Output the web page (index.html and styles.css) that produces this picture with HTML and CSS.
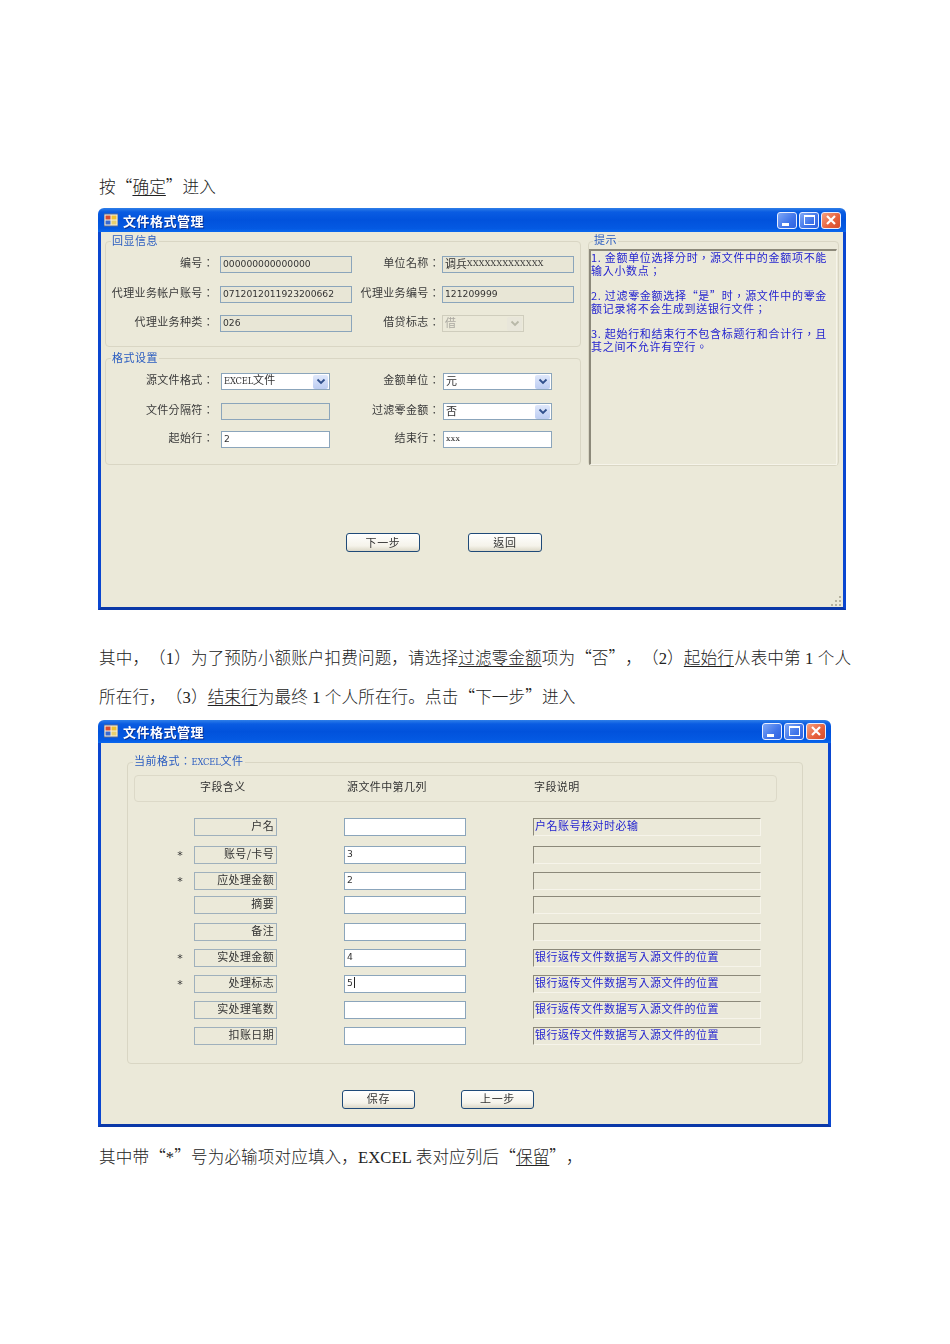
FILE: index.html
```html
<!DOCTYPE html>
<html lang="zh-CN">
<head>
<meta charset="utf-8">
<title>文件格式管理</title>
<link rel="stylesheet" href="styles.css">
</head>
<body>
<p class="para first">按<span class="q">“</span><u>确定</u><span class="q">”</span>进入</p>

<section class="win win-a" lang="zh-TW">
  <header class="titlebar">
    <svg class="appicon" viewBox="0 0 14 14"><rect x="0" y="1" width="14" height="12" fill="#f4f0e0" stroke="#5a6a90"/><rect x="1.5" y="2.5" width="5" height="4" fill="#d84a30"/><rect x="7.5" y="2.5" width="5" height="4" fill="#f0c030"/><rect x="1.5" y="7.5" width="5" height="4" fill="#3a6ad0"/><rect x="7.5" y="7.5" width="5" height="4" fill="#e8d070"/></svg>
    <span class="wintitle">文件格式管理</span>
    <span class="winbtn wb-min"><i class="glyph-min"></i></span>
    <span class="winbtn wb-max"><i class="glyph-max"></i></span>
    <span class="winbtn wb-close"><svg viewBox="0 0 12 12"><path d="M2 2L10 10M10 2L2 10" stroke="#fff" stroke-width="2.2"/></svg></span>
  </header>
  <div class="client client-a">
    <div class="leftcol">
      <div class="group group-a">
        <span class="legend">回显信息</span>
        <div class="form form-echo">
          <span class="lbl">编号：</span><span class="fld ro lat">000000000000000</span>
          <span class="lbl">单位名称：</span><span class="fld ro lat"><span class="cn">调兵</span><span class="xs">XXXXXXXXXXXXX</span></span>
          <span class="lbl">代理业务帐户账号：</span><span class="fld ro lat">0712012011923200662</span>
          <span class="lbl">代理业务编号：</span><span class="fld ro lat">121209999</span>
          <span class="lbl">代理业务种类：</span><span class="fld ro lat">026</span>
          <span class="lbl">借贷标志：</span><span class="fld combo disabled short"><span>借</span><span class="arrow"><svg viewBox="0 0 10 8"><path d="M1.5 1.5L5 5L8.5 1.5" fill="none" stroke="#b8b8a8" stroke-width="1.8"/></svg></span></span>
        </div>
      </div>
      <div class="group group-b">
        <span class="legend">格式设置</span>
        <div class="form form-fmt">
          <span class="lbl">源文件格式：</span><span class="fld combo"><span><span class="serif">EXCEL</span>文件</span><span class="arrow"><svg viewBox="0 0 10 8"><path d="M1.5 1.5L5 5L8.5 1.5" fill="none" stroke="#30508c" stroke-width="1.8"/></svg></span></span>
          <span class="lbl">金额单位：</span><span class="fld combo"><span>元</span><span class="arrow"><svg viewBox="0 0 10 8"><path d="M1.5 1.5L5 5L8.5 1.5" fill="none" stroke="#30508c" stroke-width="1.8"/></svg></span></span>
          <span class="lbl">文件分隔符：</span><span class="fld ro"></span>
          <span class="lbl">过滤零金额：</span><span class="fld combo"><span>否</span><span class="arrow"><svg viewBox="0 0 10 8"><path d="M1.5 1.5L5 5L8.5 1.5" fill="none" stroke="#30508c" stroke-width="1.8"/></svg></span></span>
          <span class="lbl">起始行：</span><span class="fld lat">2</span>
          <span class="lbl">结束行：</span><span class="fld"><span class="xs">xxx</span></span>
        </div>
      </div>
      <div class="actions actions-a">
        <span class="btn">下一步</span>
        <span class="btn">返回</span>
      </div>
    </div>
    <div class="group group-tip">
      <span class="legend">提示</span>
      <div class="tipbox">1. 金额单位选择分时，源文件中的金额项不能<br>输入小数点；<br><br>2. 过滤零金额选择“是”时，源文件中的零金<br>额记录将不会生成到送银行文件；<br><br>3. 起始行和结束行不包含标题行和合计行，且<br>其之间不允许有空行。</div>
    </div>
    <svg class="grip" viewBox="0 0 12 12"><g fill="#b5b2a0"><rect x="9" y="9" width="2" height="2"/><rect x="5" y="9" width="2" height="2"/><rect x="1" y="9" width="2" height="2"/><rect x="9" y="5" width="2" height="2"/><rect x="5" y="5" width="2" height="2"/><rect x="9" y="1" width="2" height="2"/></g></svg>
  </div>
</section>

<p class="para second">其中，（1）为了预防小额账户扣费问题，请选择<u>过滤零金额</u>项为<span class="q">“</span>否<span class="q">”</span>，（2）<u>起始行</u>从表中第 1 个人<br>所在行，（3）<u>结束行</u>为最终 1 个人所在行。点击<span class="q">“</span>下一步<span class="q">”</span>进入</p>

<section class="win win-b" lang="zh-TW">
  <header class="titlebar">
    <svg class="appicon" viewBox="0 0 14 14"><rect x="0" y="1" width="14" height="12" fill="#f4f0e0" stroke="#5a6a90"/><rect x="1.5" y="2.5" width="5" height="4" fill="#d84a30"/><rect x="7.5" y="2.5" width="5" height="4" fill="#f0c030"/><rect x="1.5" y="7.5" width="5" height="4" fill="#3a6ad0"/><rect x="7.5" y="7.5" width="5" height="4" fill="#e8d070"/></svg>
    <span class="wintitle">文件格式管理</span>
    <span class="winbtn wb-min"><i class="glyph-min"></i></span>
    <span class="winbtn wb-max"><i class="glyph-max"></i></span>
    <span class="winbtn wb-close"><svg viewBox="0 0 12 12"><path d="M2 2L10 10M10 2L2 10" stroke="#fff" stroke-width="2.2"/></svg></span>
  </header>
  <div class="client client-b">
    <div class="group group-map">
      <span class="legend">当前格式：<span class="serif">EXCEL</span>文件</span>
      <div class="headpanel">
        <span>字段含义</span><span>源文件中第几列</span><span>字段说明</span>
      </div>
      <div class="rows">
        <span></span><span class="cell-l">户名</span><span class="cell-i"></span><span class="cell-d">户名账号核对时必输</span>
        <span class="star">*</span><span class="cell-l">账号/卡号</span><span class="cell-i lat">3</span><span class="cell-d"></span>
        <span class="star">*</span><span class="cell-l">应处理金额</span><span class="cell-i lat">2</span><span class="cell-d"></span>
        <span></span><span class="cell-l">摘要</span><span class="cell-i"></span><span class="cell-d"></span>
        <span></span><span class="cell-l">备注</span><span class="cell-i"></span><span class="cell-d"></span>
        <span class="star">*</span><span class="cell-l">实处理金额</span><span class="cell-i lat">4</span><span class="cell-d">银行返传文件数据写入源文件的位置</span>
        <span class="star">*</span><span class="cell-l">处理标志</span><span class="cell-i lat">5<i class="caret"></i></span><span class="cell-d">银行返传文件数据写入源文件的位置</span>
        <span></span><span class="cell-l">实处理笔数</span><span class="cell-i"></span><span class="cell-d">银行返传文件数据写入源文件的位置</span>
        <span></span><span class="cell-l">扣账日期</span><span class="cell-i"></span><span class="cell-d">银行返传文件数据写入源文件的位置</span>
      </div>
    </div>
    <div class="actions actions-b">
      <span class="btn">保存</span>
      <span class="btn">上一步</span>
    </div>
  </div>
</section>

<p class="para third">其中带<span class="q">“</span>*<span class="q">”</span>号为必输项对应填入，EXCEL 表对应列后<span class="q">“</span><u>保留</u><span class="q">”</span>，</p>
</body>
</html>
```

FILE: styles.css
```css
* { box-sizing: border-box; }
html, body { margin: 0; background: #fff; }
body {
  width: 950px;
  height: 1344px;
  overflow: hidden;
  padding: 176px 0 0 98px;
  font-family: "Liberation Serif", "Noto Sans CJK SC", serif;
  color: #222;
  text-spacing-trim: space-all;
}
.para {
  margin: 0;
  padding-left: 1px;
  font-size: 16.6px;
  font-weight: 300;
  letter-spacing: 0.11px;
  white-space: nowrap;
}
.para u { text-underline-offset: 2px; text-decoration-thickness: 1px; }
.q { font-family: "Noto Sans CJK SC", sans-serif; line-height: 0; }
.first { height: 24px; line-height: 24px; margin-bottom: 8px; }
.second { line-height: 39px; margin: 29px 0 2.5px; }
.third { line-height: 24px; margin-top: 19px; }

.win {
  display: flex;
  flex-direction: column;
  font-family: "Noto Sans CJK TC", "DejaVu Sans", sans-serif;
  font-size: 11px;
  letter-spacing: 0.35px;
  color: #333;
  filter: blur(0.3px);
}
.win-a { width: 748px; height: 402px; }
.win-b { width: 733px; height: 407px; }

.titlebar {
  display: flex;
  align-items: center;
  flex: none;
  height: 24px;
  padding: 0 5px 0 6px;
  border-radius: 6px 6px 0 0;
  background: linear-gradient(#2f7fe8 0, #0a5ce2 4px, #0152dc 50%, #0459e2 85%, #0a68ee 100%);
}
.win-b .titlebar { height: 23px; }
.appicon { width: 14px; height: 14px; flex: none; }
.wintitle {
  margin-left: 5px;
  margin-right: auto;
  font-size: 13px;
  font-weight: 700;
  letter-spacing: 0.5px;
  color: #fff;
  text-shadow: 1px 1px 0 #0a2f90;
}
.winbtn {
  display: flex;
  align-items: center;
  justify-content: center;
  width: 20px;
  height: 17px;
  margin-left: 2px;
  border: 1px solid #e8eeff;
  border-radius: 3px;
  background: linear-gradient(135deg, #7fa8f6, #3f74ea 60%, #2f62e0);
}
.wb-close { background: linear-gradient(135deg, #f4a080, #e6603c 60%, #d64c2c); }
.wb-close svg { width: 12px; height: 12px; }
.glyph-min { width: 7px; height: 3px; margin-top: 8px; margin-right: 4px; background: #fff; }
.glyph-max { width: 11px; height: 10px; border: 1px solid #fff; border-top-width: 2px; }

.client {
  position: relative;
  flex: 1;
  background: #ebe9d9;
  border: 3px solid #0a46d0;
  border-top: 0;
  border-bottom-color: #0a38a8;
}
.client-a { display: flex; gap: 7px; padding: 9px 0 0 4px; }
.client-b { padding: 19px 0 0 26px; }
.leftcol { width: 476px; }

.group {
  position: relative;
  border: 1px solid #d9d6c4;
  border-radius: 4px;
}
.group-a { height: 106px; padding-top: 14px; }
.group-b { height: 107px; padding-top: 14px; margin-top: 11px; }
.group-tip { width: 251px; height: 225px; padding: 7px 1px 1px 0; }
.group-map { width: 676px; height: 302px; padding: 12px 0 0 6px; }
.legend {
  position: absolute;
  top: -9px;
  left: 5px;
  padding: 0 1px;
  background: #ebe9d9;
  line-height: 14px;
  letter-spacing: 0.5px;
  color: #2a5cc0;
}
.group-tip .legend { top: -10px; left: 4px; }
.group-map .legend { top: -10px; }

.form { display: grid; align-items: start; }
.form-echo { grid-template-columns: 107px 139px 87px 135px; grid-template-rows: 30px 29px 17px; }
.form-fmt { grid-template-columns: 107px 117px 109px 113px; grid-template-rows: 30px 28px 17px; }
.form-echo .fld:nth-child(2), .form-echo .fld:nth-child(6), .form-echo .fld:nth-child(10) { margin-left: 7px; }
.form-echo .fld:nth-child(4), .form-echo .fld:nth-child(8), .form-echo .fld:nth-child(12) { margin-left: 3px; }
.form-fmt .fld:nth-child(2), .form-fmt .fld:nth-child(6), .form-fmt .fld:nth-child(10) { margin-left: 8px; }
.form-fmt .fld:nth-child(4), .form-fmt .fld:nth-child(8), .form-fmt .fld:nth-child(12) { margin-left: 4px; }
.lbl { line-height: 13px; margin-right: -1px; text-align: right; white-space: nowrap; color: #3a3a3a; }
.fld {
  display: flex;
  align-items: center;
  height: 17px;
  padding: 0 0 2px 2px;
  background: #fff;
  border: 1px solid #8ba5bb;
  white-space: nowrap;
}
.ro { background: #e8e6d6; }
.lat { font-family: "DejaVu Sans", "Noto Sans CJK TC", sans-serif; font-size: 9.2px; letter-spacing: 0; }
.cn { font-family: "Noto Sans CJK TC", sans-serif; font-size: 11px; line-height: 11px; padding-bottom: 1px; }
.xs { font-family: "DejaVu Serif", serif; font-size: 7.8px; letter-spacing: 0.35px; }
.serif { font-family: "DejaVu Serif", serif; font-size: 8.4px; letter-spacing: -0.2px; }
.combo { justify-content: space-between; padding: 0 1px 0 2px; }
.combo > span:first-child { line-height: 12px; padding-bottom: 3px; }
.arrow {
  display: flex;
  align-items: center;
  justify-content: center;
  width: 15px;
  height: 14px;
  border-radius: 2px;
  background: linear-gradient(#dfe8fb, #bccdf2);
}
.arrow svg { width: 10px; height: 8px; }
.disabled { color: #aaa8a0; background: #ebe9d9; border-color: #cfcdbd; }
.disabled .arrow { background: #e8e6da; }
.short { width: 82px; }

.actions { display: flex; }
.actions-a { gap: 48px; margin: 68px 0 0 241px; }
.actions-b { gap: 46px; margin: 26px 0 0 215px; }
.btn {
  display: flex;
  align-items: center;
  justify-content: center;
  width: 74px;
  height: 19px;
  padding-bottom: 2px;
  border: 1px solid #1f4a78;
  border-radius: 3px;
  background: linear-gradient(#fff, #f5f3ea 70%, #dcd8c8);
  letter-spacing: 0.7px;
}
.actions-b .btn { width: 73px; }

.tipbox {
  height: 216px;
  border: 1px solid #f6f4ea;
  border-top: 2px solid #8c897a;
  border-left: 2px solid #8c897a;
  line-height: 12.7px;
  letter-spacing: 0.7px;
  color: #2424d0;
  white-space: nowrap;
}

.grip { position: absolute; right: 1px; bottom: 0; width: 12px; height: 12px; }

.headpanel {
  display: grid;
  grid-template-columns: 147px 187px 1fr;
  align-items: center;
  width: 643px;
  height: 27px;
  padding: 0 0 5px 65px;
  border: 1px solid #dcd9c8;
  border-radius: 4px;
  letter-spacing: 0.4px;
}
.rows {
  display: grid;
  grid-template-columns: 66px 150px 189px 228px;
  grid-template-rows: 28px 26px 24px 27px 26px 26px 26px 26px 18px;
  align-items: start;
  margin: 16px 0 0 -6px;
}
.star { justify-self: end; margin-right: 11px; margin-top: 3px; font-family: "DejaVu Sans", sans-serif; font-size: 11px; line-height: 14px; }
.cell-l {
  width: 83px;
  height: 18px;
  padding-right: 2px;
  border: 1px solid #9fb0bc;
  line-height: 13px;
  text-align: right;
  white-space: nowrap;
}
.cell-i {
  display: flex;
  align-items: center;
  width: 122px;
  height: 18px;
  padding: 0 0 2px 2px;
  background: #fff;
  border: 1px solid #8ba5bb;
}
.caret { width: 1px; height: 11px; margin-left: 1px; background: #222; }
.cell-d {
  width: 228px;
  height: 18px;
  padding-left: 1px;
  border: 1px solid #f6f4ea;
  border-top: 1px solid #8c897a;
  border-left: 1px solid #8c897a;
  color: #2424d0;
  line-height: 13px;
  letter-spacing: 0.5px;
  white-space: nowrap;
}
```
